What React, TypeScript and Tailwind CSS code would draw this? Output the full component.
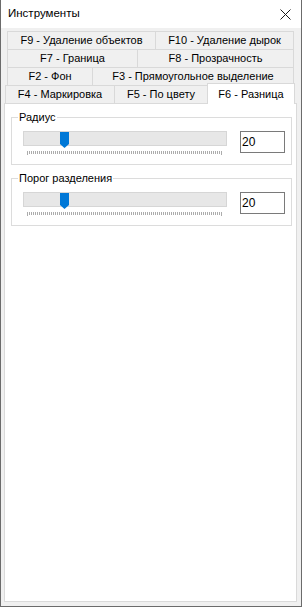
import React from "react";

const topRows: { label: string; w: string }[][] = [
    [
        { label: "F9 - Удаление объектов", w: "w-[148px]" },
        { label: "F10 - Удаление дырок", w: "flex-1" },
    ],
    [
        { label: "F7 - Граница", w: "w-[130px]" },
        { label: "F8 - Прозрачность", w: "flex-1" },
    ],
    [
        { label: "F2 - Фон", w: "w-[85px]" },
        { label: "F3 - Прямоугольное выделение", w: "flex-1" },
    ],
];

function Ticks() {
    const ticks = Array.from({ length: 98 }, (_, i) => i);
    return (
        <svg width="198" height="5" className="block" shapeRendering="crispEdges">
            {ticks.map((i) => {
                const tall = i === 0 || i === ticks.length - 1;
                return (
                    <line
                        key={i}
                        x1={i * 2 + 0.5}
                        x2={i * 2 + 0.5}
                        y1={0}
                        y2={tall ? 4 : 3}
                        stroke="#acacac"
                        strokeWidth={1}
                    />
                );
            })}
        </svg>
    );
}

function SliderGroup({ title, value }: { title: string; value: string }) {
    return (
        <fieldset className="mx-0 ml-[6px] mr-[4px] border border-[#dcdcdc] px-0 pb-[8px]">
            <legend className="ml-[6px] px-[1px] leading-[16px]">{title}</legend>
            <div className="mt-[6px] flex items-start pl-[11px]">
                {/* Trackbar */}
                <div className="flex w-[204px] flex-col">
                    <div className="relative h-[15px] border border-[#d6d6d6] bg-[#e7e7e7]">
                        <svg
                            width="9"
                            height="16"
                            viewBox="0 0 9 16"
                            className="absolute left-[36px] top-0"
                        >
                            <path d="M0 0 H9 V12 L4.5 16 L0 12 Z" fill="#0078d7" />
                        </svg>
                    </div>
                    <div className="ml-[4px] mt-[5px]">
                        <Ticks />
                    </div>
                </div>
                {/* Value box */}
                <div className="ml-[13px] flex h-[22px] w-[45px] items-center border border-[#7a7a7a] bg-white pl-[1px] text-[12px] leading-none">
                    {value}
                </div>
            </div>
        </fieldset>
    );
}

export default function App() {
    return (
        <div className="flex h-[607px] w-[302px] flex-col border-x border-b border-[#6b6b6b] bg-[#f0f0f0] font-['Liberation_Sans',Arial,sans-serif] text-[11px] text-black">
            {/* Title bar */}
            <div className="flex h-[28px] shrink-0 items-center justify-between bg-white pl-[7px] pr-[10px]">
                <span className="text-[11.5px]">Инструменты</span>
                <svg width="11" height="11" viewBox="0 0 11 11">
                    <path d="M0.5 0.5 L10.5 10.5 M10.5 0.5 L0.5 10.5" stroke="#1a1a1a" strokeWidth="1" />
                </svg>
            </div>

            {/* Tab control */}
            <div className="flex flex-1 flex-col pb-[4px] pl-[3px] pr-[4px] pt-[3px]">
                {topRows.map((row, r) => (
                    <div key={r} className="mx-[3px] flex h-[18px]">
                        {row.map((tab, i) => (
                            <div
                                key={tab.label}
                                className={`${tab.w} flex items-center justify-center border-l border-t border-[#d9d9d9] ${
                                    i === row.length - 1 ? "border-r" : ""
                                } leading-none`}
                            >
                                {tab.label}
                            </div>
                        ))}
                    </div>
                ))}
                <div className="mx-[1px] flex h-[18px] items-end">
                    <div className="flex h-[18px] w-[109px] items-center justify-center border-l border-t border-[#d9d9d9] leading-none">
                        F4 - Маркировка
                    </div>
                    <div className="flex h-[18px] w-[93px] items-center justify-center border-l border-t border-[#d9d9d9] leading-none">
                        F5 - По цвету
                    </div>
                    <div className="relative z-10 -mb-[1px] flex h-[21px] w-[88px] items-center justify-center border-x border-t border-[#d9d9d9] bg-white leading-none">
                        F6 - Разница
                    </div>
                </div>

                {/* Tab page */}
                <div className="flex flex-1 flex-col gap-[5px] border border-[#dadada] bg-white pt-[5px]">
                    <SliderGroup title="Радиус" value="20" />
                    <SliderGroup title="Порог разделения" value="20" />
                </div>
            </div>
        </div>
    );
}
